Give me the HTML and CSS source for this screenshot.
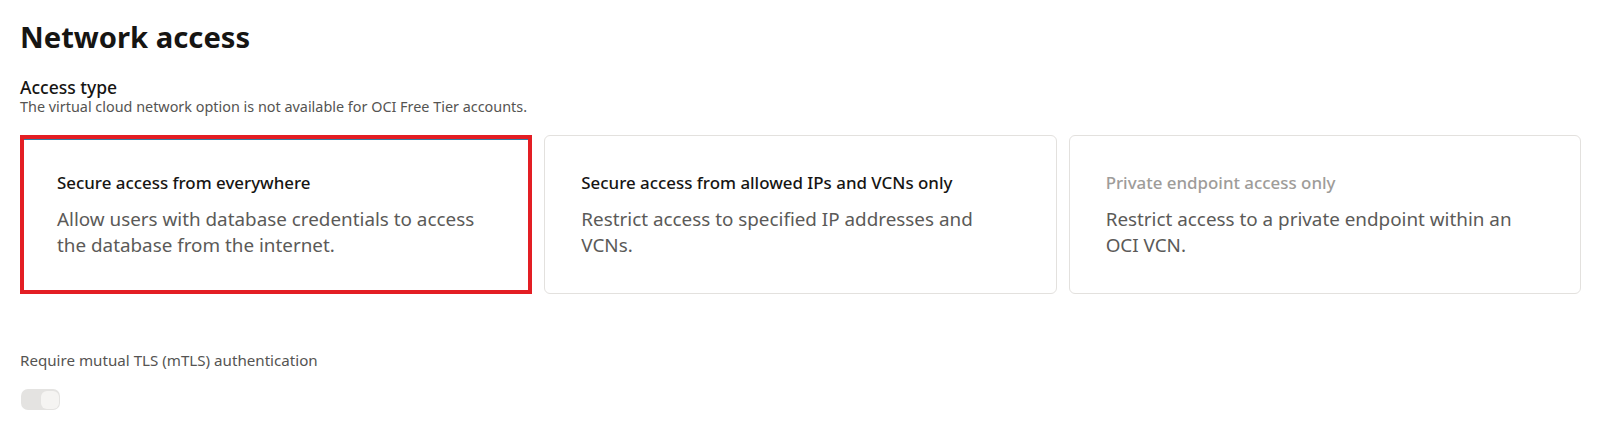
FILE: index.html
```html
<!DOCTYPE html>
<html lang="en">
<head>
<meta charset="utf-8">
<title>Network access</title>
<link rel="stylesheet" href="styles.css">
</head>
<body>
<main class="page">
  <h1 class="title">Network access</h1>
  <section class="field">
    <div class="label">Access type</div>
    <div class="help">The virtual cloud network option is not available for OCI Free Tier accounts.</div>
    <div class="cards">
      <div class="card selected">
        <div class="card-title">Secure access from everywhere</div>
        <div class="card-desc">Allow users with database credentials to access the database from the internet.</div>
      </div>
      <div class="card">
        <div class="card-title">Secure access from allowed IPs and VCNs only</div>
        <div class="card-desc">Restrict access to specified IP addresses and VCNs.</div>
      </div>
      <div class="card disabled">
        <div class="card-title">Private endpoint access only</div>
        <div class="card-desc">Restrict access to a private endpoint within an OCI VCN.</div>
      </div>
    </div>
  </section>
  <section class="mtls">
    <div class="mtls-label">Require mutual TLS (mTLS) authentication</div>
    <div class="toggle"><span class="knob"></span></div>
  </section>
</main>
</body>
</html>
```

FILE: styles.css
```css
* { box-sizing: border-box; }
html, body { margin: 0; padding: 0; background: #ffffff; }
body {
  font-family: "Noto Sans", "Liberation Sans", sans-serif;
  color: #161513;
}
.page {
  padding: 19px 21px 0 20px;
}
.title {
  margin: 0;
  font-size: 29.2px;
  line-height: 36px;
  font-weight: 700;
}
.field { margin-top: 21px; }
.label {
  font-size: 17.5px;
  line-height: 22px;
  font-weight: 500;
}
.help {
  font-size: 14.4px;
  line-height: 18px;
  color: #555452;
}
.cards {
  margin-top: 19px;
  display: grid;
  grid-template-columns: repeat(3, 1fr);
  gap: 12px;
}
.card {
  height: 159px;
  border: 1px solid #e3e1de;
  border-radius: 6px;
  padding: 36px 34px 0 36px;
  background: #fff;
}
.card.selected {
  border: 4px solid #e31e24;
  border-radius: 0;
  padding: 33px 31px 0 33px;
  box-shadow: inset 0 1px 0 #2f7ea8;
}
.card-title {
  font-size: 16.9px;
  line-height: 22px;
  font-weight: 500;
  color: #161513;
}
.card.disabled .card-title { color: #9e9c99; }
.card-desc {
  margin-top: 12px;
  font-size: 18.85px;
  line-height: 26px;
  color: #5b5a58;
}
.mtls { margin-top: 56px; }
.mtls-label {
  font-size: 15.15px;
  line-height: 20px;
  color: #555452;
}
.toggle {
  margin-top: 19px;
  margin-left: 1px;
  width: 39px;
  height: 21px;
  border-radius: 7px;
  background: #e4e3e1;
  display: flex;
  align-items: center;
  justify-content: flex-end;
  padding-right: 1px;
}
.knob {
  width: 18px;
  height: 18px;
  border-radius: 6px;
  background: #f5f4f2;
}
```
